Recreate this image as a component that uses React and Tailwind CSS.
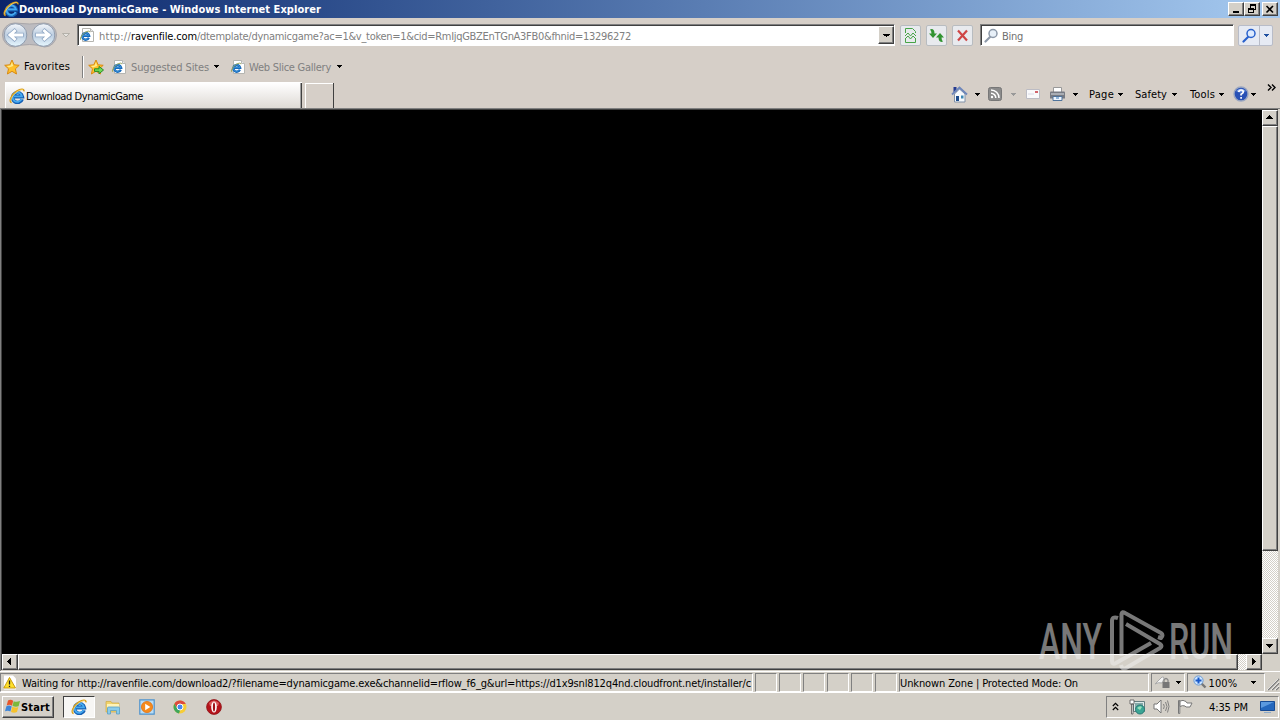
import React, { useLayoutEffect, useRef, useState } from "react";

const tahoma = "font-['DejaVu_Sans_Condensed','DejaVu_Sans',sans-serif]";

const raised = "bg-[#d4d0c8] border border-t-white border-l-white border-r-[#404040] border-b-[#404040] shadow-[inset_-1px_-1px_0_#808080]";
const sunken = "border border-t-[#808080] border-l-[#808080] border-r-white border-b-white";
const input = "border border-t-[#808080] border-l-[#808080] border-r-white border-b-white bg-white shadow-[inset_1px_1px_0_#404040]";

// One line of text whose letter spacing is adjusted until it is w pixels wide
const Label = ({ children, w, className = "" }) => {
  const ref = useRef(null);
  const [spacing, setSpacing] = useState(0);

  useLayoutEffect(() => {
    const natural = ref.current.getBoundingClientRect().width;
    setSpacing((w - natural) / ref.current.textContent.length);
  }, [w]);

  return (
    <span ref={ref} className={`shrink-0 whitespace-nowrap leading-[15px] ${className}`} style={{ letterSpacing: spacing }}>
      {children}
    </span>
  );
};

const Caret = ({ color = "#000", className = "", size = 5 }) => (
  <svg width={size} height="3" viewBox="0 0 5 3" className={`shrink-0 ${className}`} preserveAspectRatio="none" shapeRendering="crispEdges">
    <path d="M0 0H5V1H4V2H3V3H2V2H1V1H0z" fill={color} />
  </svg>
);

const IeLogo = ({ className = "" }) => (
  <svg width="16" height="16" viewBox="0 0 16 16" className={`shrink-0 ${className}`}>
    <path d="M13.2 11.2A4.9 4.9 0 1 1 13.4 8.8H5" fill="none" stroke="#1560b4" strokeWidth="3.5" />
    <path d="M12.6 11A4.7 4.7 0 1 1 12.9 8.4H5" fill="none" stroke="#46aaf0" strokeWidth="1.9" />
    <path d="M2.6 14.6C-.8 13.6 2.6 6.6 7.6 3.2C11.5 .7 15.4.2 14.9 3.4" fill="none" stroke="#d99c18" strokeWidth="1.5" />
    <path d="M2.4 13.6C.6 12.2 4 6.8 8 3.8C11 1.8 13.5 1.2 14.2 2" fill="none" stroke="#ffe37a" strokeWidth=".7" />
  </svg>
);

const IePage = ({ className = "" }) => (
  <svg width="16" height="16" viewBox="0 0 16 16" className={`shrink-0 ${className}`}>
    <path d="M3.5 1.5h8l3 3v10h-11z" fill="#fff" stroke="#b5b5b0" />
    <path d="M11.5 1.5v3h3" fill="#e8e8e8" stroke="#b8b8b4" />
    <path d="M9.8 10.8A3.4 3.4 0 1 1 10.1 8.8H4" fill="none" stroke="#1767b8" strokeWidth="2.4" />
    <path d="M9.5 10.6A3.3 3.3 0 1 1 9.8 8.6H4" fill="none" stroke="#3c9be0" strokeWidth=".8" />
    <path d="M1.7 12.8C.7 11 3.5 6.8 6.5 5.2C8.5 4.1 10.9 3.5 10.9 5.2" fill="none" stroke="#9aa652" strokeWidth="1" />
  </svg>
);

const Star = ({ add = false }) => (
  <svg width="16" height="16" viewBox="0 0 16 16" className="shrink-0">
    <path d="M8 1L10.1 5.8L15.2 6.3L11.4 9.8L12.5 15L8 12.3L3.4 15L4.5 9.8L.7 6.3L5.8 5.8z" fill="#ffc02a" stroke="#d98a12" strokeLinejoin="round" />
    <path d="M8 3L9.2 7L5 8.6L2.6 7L6.5 6.6z" fill="#ffeb8a" />
    {add && <path d="M6.5 9.8h4.5V7.4L15.5 11l-4.5 3.8v-2.4H6.5z" fill="#6fda58" stroke="#2b8a25" />}
  </svg>
);

const WindowButton = ({ children, className = "" }) => (
  <div className={`${raised} flex h-[14px] w-4 items-center justify-center ${className}`}>{children}</div>
);

const TitleBar = () => (
  <header className="flex h-[18px] items-center bg-linear-to-r from-[#0a246a] to-[#a6caf0] pl-[3px] pr-[2px]">
    <IeLogo />
    <Label w={302} className="font-bold text-white">Download DynamicGame - Windows Internet Explorer</Label>
    <WindowButton className="ml-auto">
      <svg width="12" height="10" shapeRendering="crispEdges"><path d="M3 7h6v2H3z" /></svg>
    </WindowButton>
    <WindowButton>
      <svg width="10" height="10" shapeRendering="crispEdges" fill="none" stroke="#000">
        <path d="M3.5 3.5v-3h5v5h-2M3 1.5h6M1.5 4.5h5v4h-5zM1 5.5h6" />
      </svg>
    </WindowButton>
    <WindowButton className="ml-[2px]">
      <svg width="10" height="9"><path d="M1.5 1l6.5 6.5M8 1L1.5 7.5" stroke="#000" strokeWidth="1.6" /></svg>
    </WindowButton>
  </header>
);

const NavArrows = () => (
  <svg width="72" height="30" viewBox="-.5 0 72 30" className="shrink-0">
    <defs>
      <linearGradient id="orb" x1="0" y1="0" x2="0" y2="1">
        <stop offset="0" stopColor="#f4f7fb" />
        <stop offset=".5" stopColor="#bccde0" />
        <stop offset="1" stopColor="#e6f7ff" />
      </linearGradient>
    </defs>
    <path d="M14 3Q29 5 44 3A12 12 0 0 1 44 27Q29 22 14 27A12 12 0 0 1 14 3z" fill="#bdbcc0" stroke="#a8a6aa" />
    {[15, 43].map((x) => (
      <circle key={x} cx={x} cy="15" r="11.3" fill="url(#orb)" stroke="#8f9cae" />
    ))}
    <g fill="none" strokeLinecap="square">
      <path d="M21 15H10M14 11L9.5 15L14 19M37 15H48M44 11L48.5 15L44 19" stroke="#8ea6c4" strokeWidth="4.4" />
      <path d="M21 15H10M14 11L9.5 15L14 19M37 15H48M44 11L48.5 15L44 19" stroke="#fff" strokeWidth="3" />
    </g>
    <path d="M62 13.5h7L65.5 17z" fill="#e6e4e0" stroke="#aaa7a0" strokeWidth=".8" />
  </svg>
);

const ToolButton = ({ children, className = "" }) => (
  <div className={`flex h-[21px] w-[21px] items-center justify-center rounded-[2px] border border-[#b8bcc0] bg-[#e8eaee] ${className}`}>
    {children}
  </div>
);

const Magnifier = ({ stroke, lens }) => (
  <svg width="15" height="15" viewBox="0 0 15 15">
    <path d="M6.5 8.5L1.5 13.5" stroke={stroke} strokeWidth="2.2" strokeLinecap="round" />
    <circle cx="9" cy="5.5" r="4" fill={lens} stroke={stroke} strokeWidth="1.5" />
  </svg>
);

const NavBar = () => (
  <div className="flex h-[34px] items-center bg-[#d6cfc8]">
    <NavArrows />
    <div className={`${input} ml-[5px] flex h-[22px] w-[818px] items-center text-[#808080]`}>
      <IePage className="ml-px" />
      <Label className="ml-1 mt-[2px]" w={32}>http://</Label>
      <Label className="mt-[2px] text-black" w={66}>ravenfile.com</Label>
      <Label className="mt-[2px]" w={434}>/dtemplate/dynamicgame?ac=1&amp;v_token=1&amp;cid=RmIjqGBZEnTGnA3FB0&amp;fhnid=13296272</Label>
      <div className={`${raised} ml-auto flex h-[18px] w-4 items-center justify-center`}>
        <Caret size={7} />
      </div>
    </div>
    <ToolButton className="ml-[5px]">
      <svg width="13" height="15" fill="none" stroke="#47a447">
        <path d="M1.5 5V.5h7l3 3V5M1.5 10v4.5h10V10M1 8l3-3 2.5 3L9 5l3 3M1 11l3-3 2.5 3L9 8l3 3" />
      </svg>
    </ToolButton>
    <ToolButton className="ml-[5px]">
      <svg width="17" height="15" fill="#329432">
        <path d="M3.5 1Q6.5 1 6.5 5.5H9L5 10L1 5.5h2.5Q3.5 3 2 1.5z" />
        <path d="M13.5 14Q10.5 13.5 10.5 9.5H8L12 5l4 4.5h-2.5Q13.5 12 15 13.5z" />
      </svg>
    </ToolButton>
    <ToolButton className="ml-[5px]">
      <svg width="13" height="13"><path d="M2 1.5l9 10M11 1.5l-9 10" stroke="#cf4545" strokeWidth="2.2" /></svg>
    </ToolButton>
    <div className={`${input} ml-[7px] flex h-[22px] w-[254px] items-center pl-[3px]`}>
      <Magnifier stroke="#8c98a8" lens="#e8f0f8" />
      <Label className="ml-[3px] mt-[2px] text-[#707070]" w={21}>Bing</Label>
    </div>
    <div className="ml-1 flex h-[21px] w-[35px] items-center rounded-[2px] border border-[#b8bcc8] bg-[#e6eaf3]">
      <div className="flex h-full w-[21px] items-center justify-center border-r border-[#b8bcc8]">
        <Magnifier stroke="#2860cc" lens="#dceaff" />
      </div>
      <Caret className="ml-1" color="#2050a0" />
    </div>
  </div>
);

const FavoritesBar = () => (
  <div className="flex h-[29px] items-center bg-[#d6cfc8] pl-1">
    <Star />
    <Label className="ml-1" w={46}>Favorites</Label>
    <div className="ml-3 mr-[4px] h-[22px] w-[2px] border-l border-[#808080] bg-white" />
    <Star add />
    <IePage className="ml-[7px]" />
    <Label className="ml-[4px] mt-[2px] text-[#808080]" w={78}>Suggested Sites</Label>
    <Caret className="ml-[5px]" />
    <IePage className="ml-[11px]" />
    <Label className="ml-[3px] mt-[2px] text-[#808080]" w={82}>Web Slice Gallery</Label>
    <Caret className="ml-[6px]" />
  </div>
);

const HomeIcon = () => (
  <svg width="17" height="17" viewBox="0 0 17 17">
    <path d="M2.5 1h3v5h-3z" fill="#253a90" />
    <path d="M3.5 8L8.5 3l5.5 5v8h-10.5z" fill="#f6f9fc" stroke="#8292a8" />
    <path d="M1 8.5L8.5 1.5L16 8.5" fill="none" stroke="#6d86bb" strokeWidth="1.8" />
    <path d="M5 10h3v5H5z" fill="#1d4c8c" /><path d="M10 9.5h2.5v3H10z" fill="#3d88b5" />
  </svg>
);

const FeedIcon = () => (
  <svg width="14" height="14" viewBox="0 0 14 14">
    <rect x=".5" y=".5" width="13" height="13" rx="2" fill="#8b8b8b" stroke="#777" />
    <path d="M3 6.2A4.8 4.8 0 0 1 7.8 11M3 3A8 8 0 0 1 11 11" fill="none" stroke="#fff" strokeWidth="1.5" />
    <circle cx="4" cy="10" r="1.2" fill="#fff" />
  </svg>
);

const PrinterIcon = () => (
  <svg width="17" height="16" viewBox="0 0 17 16">
    <path d="M4.5 1.5h8v5h-8z" fill="#fff" stroke="#999" />
    <path d="M1 6.5q0-1 1-1h13q1 0 1 1v6H1z" fill="#777b83" />
    <path d="M2 7h13v2H2z" fill="#a9adb4" />
    <path d="M4 10.5h9v4H4z" fill="#eef6ff" stroke="#50749c" />
    <path d="M7 12h3" stroke="#3777b5" />
  </svg>
);

const HelpIcon = () => (
  <svg width="16" height="16" viewBox="0 0 16 16">
    <circle cx="8" cy="8" r="7" fill="#2951b5" stroke="#9aa6c0" strokeWidth="1.4" />
    <path d="M3 5Q8 .5 13 5Q8 8 3 5" fill="#7c9fe3" />
    <path d="M5.8 6Q6 4 8.1 4T10.3 6Q10.3 7 8.1 8.3V9.6M8.1 11v1.7" fill="none" stroke="#fff" strokeWidth="1.7" />
  </svg>
);

const TabRow = () => (
  <div className="flex h-[27px] items-end bg-[#d6cfc8] pl-[5px]">
    <div className="flex h-[26px] w-[297px] items-center border-t border-l border-white bg-linear-to-b from-white to-[#dedad5] pl-[3px] shadow-[inset_-1px_0_0_#404040,inset_-2px_0_0_#a0a0a0]">
      <IeLogo />
      <Label className="ml-px mt-[2px]" w={117}>Download DynamicGame</Label>
    </div>
    <div className="ml-[3px] h-[25px] w-[28px] border-t border-l border-white shadow-[1px_0_0_#404040]" />
    <div className="ml-auto flex h-full items-center pr-[4px] pb-[1px]">
      <HomeIcon />
      <Caret className="ml-[7px]" />
      <div className="ml-[8px]"><FeedIcon /></div>
      <Caret className="ml-[9px]" color="#999" />
      <svg width="14" height="10" className="ml-[10px]">
        <path d="M.5.5h13v9H.5z" fill="#f9f9fb" stroke="#bcbcc4" />
        <path d="M9 2h3v2H9z" fill="#d2636b" /><path d="M2 5h6" stroke="#d8d8e4" />
      </svg>
      <div className="ml-[9px]"><PrinterIcon /></div>
      <Caret className="ml-[7px]" />
      <Label className="ml-[11px]" w={25}>Page</Label>
      <Caret className="ml-[4px]" />
      <Label className="ml-[12px]" w={32}>Safety</Label>
      <Caret className="ml-[5px]" />
      <Label className="ml-[13px]" w={25}>Tools</Label>
      <Caret className="ml-[4px]" />
      <div className="ml-[9px]"><HelpIcon /></div>
      <Caret className="ml-[2px]" />
      <svg width="9" height="7" className="ml-[11px] mb-[13px]" fill="none" stroke="#000" strokeWidth="1.4">
        <path d="M1 .5l3 3-3 3M5 .5l3 3-3 3" />
      </svg>
    </div>
  </div>
);

const track = "bg-[repeating-conic-gradient(#fff_0_25%,#d4d0c8_0_50%)] bg-[length:2px_2px]";

const arrows = {
  up: "M4 2h1v1h1v1h1v1h1v1H1V5h1V4h1V3h1z",
  down: "M1 3h7v1H7v1H6v1H5v1H4V6H3V5H2V4H1z",
  left: "M2 4h1V3h1V2h1V1h1v7H5V7H4V6H3V5H2z",
  right: "M3 1h1v1h1v1h1v1h1v1H6v1H5v1H4v1H3z",
};

const ScrollButton = ({ dir }) => (
  <div className={`${raised} flex h-4 w-4 shrink-0 items-center justify-center pr-px pb-px`}>
    <svg width="9" height="9" shapeRendering="crispEdges"><path d={arrows[dir]} /></svg>
  </div>
);

const Viewport = () => (
  <main className="flex h-[563px] flex-col border-t border-l border-[#808080] bg-[#d4d0c8] pr-[2px] pb-px">
    <div className="flex h-[545px] border-t border-l border-[#404040]">
      <div className="flex-1 bg-black" />
      <div className={`flex w-4 flex-col ${track}`}>
        <ScrollButton dir="up" />
        <div className={`${raised} h-[425px]`} />
        <div className="flex-1" />
        <ScrollButton dir="down" />
      </div>
    </div>
    <div className="flex h-4 border-l border-[#404040]">
      <div className={`flex flex-1 ${track}`}>
        <ScrollButton dir="left" />
        <div className={`${raised} w-[1220px]`} />
        <div className="flex-1" />
        <ScrollButton dir="right" />
      </div>
      <div className="w-4 bg-[#d4d0c8]" />
    </div>
  </main>
);

const StatusBar = () => (
  <div className="flex h-[22px] items-center gap-[2px] border-t border-b border-white bg-[#d4d0c8]">
    <div className={`${sunken} flex h-[19px] w-[753px] shrink-0 items-center pl-[2px]`}>
      <svg width="14" height="15" viewBox="0 0 14 15" className="shrink-0">
        <path d="M1 .5h9l3 3v11H1z" fill="#fff" />
        <path d="M6.5 2.5L12.5 13H.8z" fill="#ffe02a" stroke="#c89a10" strokeLinejoin="round" />
        <path d="M6.5 5.5v4M6.5 10.7V12" stroke="#222" strokeWidth="1.3" />
      </svg>
      <Label className="ml-[5px] mt-[2px]" w={729}>
        Waiting for http://ravenfile.com/download2/?filename=dynamicgame.exe&amp;channelid=rflow_f6_g&amp;url=https://d1x9snl812q4nd.cloudfront.net/installer/c
      </Label>
    </div>
    {[0, 1, 2, 3, 4, 5].map((i) => (
      <div key={i} className={`${sunken} h-[19px] w-[22px] shrink-0`} />
    ))}
    <div className={`${sunken} flex h-[19px] w-[251px] items-center`}>
      <Label className="mt-[2px]" w={178}>Unknown Zone | Protected Mode: On</Label>
    </div>
    <div className={`${sunken} flex h-[19px] w-[35px] items-center`}>
      <svg width="18" height="16" viewBox="0 0 18 16" className="ml-[2px]">
        <path d="M1 10L8 3Q10 2 10 5L8 9Q4 8 1 10" fill="#f4f4f4" stroke="#aaa" />
        <path d="M8.5 8h7v6h-7z" fill="#777" />
        <path d="M10 8V6q2-3 4 0v2" fill="none" stroke="#888" strokeWidth="1.3" />
      </svg>
      <Caret className="ml-1" />
    </div>
    <div className={`${sunken} flex h-[19px] w-[78px] items-center pl-[5px]`}>
      <svg width="14" height="14" viewBox="0 0 14 14">
        <path d="M8 8l4.5 4.5" stroke="#777" strokeWidth="2.4" />
        <circle cx="5.5" cy="5.5" r="4.6" fill="#cce5ff" stroke="#6d9bd3" />
        <path d="M5.5 2.5v6M2.5 5.5h6" stroke="#1859c9" strokeWidth="2" />
      </svg>
      <Label className="ml-px mt-[2px]" w={29}>100%</Label>
      <Caret className="ml-[14px]" />
    </div>
    <svg width="13" height="13" className="mt-1 shrink-0">
      <path d="M1 12L12 1M5 12L12 5M9 12l3-3" stroke="#808080" strokeWidth="1.6" />
      <path d="M0 12L11 1M4 12L12 4M8 12l4-4" stroke="#fff" strokeWidth=".7" />
    </svg>
  </div>
);

const WindowsFlag = () => (
  <svg width="16" height="15" viewBox="0 0 16 15" className="shrink-0">
    <path d="M3 1.5Q5.5 0 8.2 1.8L7 6.8Q4.5 5 1.7 6.5z" fill="#e8562a" />
    <path d="M8.7 2.2Q11.5 3.5 15 2L13.6 7.2Q10.8 8.2 7.5 7z" fill="#7cb83a" />
    <path d="M1.4 7.2Q4.2 5.8 6.7 7.5L5.4 12.5Q3 11 0 12.3z" fill="#3f86d8" />
    <path d="M7.3 7.8Q10.5 9 13.3 7.9L12 13Q9.2 14.4 6 13.1z" fill="#f6c22c" />
  </svg>
);

const ExplorerIcon = () => (
  <svg width="16" height="16" viewBox="0 0 16 16">
    <path d="M1 2.5h5l1 1.5h7v9H1z" fill="#f1d36b" stroke="#cfaa45" strokeWidth=".7" />
    <path d="M2 5h12v4H2z" fill="#fff3b8" />
    <path d="M2.5 15V9q0-1 1-1h10q1 0 1 1v6h-3v-3.5h-6V15z" fill="#8acbea" stroke="#5a9fc4" strokeWidth=".8" />
  </svg>
);

const PlayerIcon = () => (
  <svg width="16" height="16" viewBox="0 0 16 16">
    <path d="M.8.8h14.4v14.4H.8z" fill="#b8dcf5" stroke="#4f93cc" strokeWidth="1.2" />
    <circle cx="8" cy="8" r="5.6" fill="#f58a1c" stroke="#df6c0c" strokeWidth=".7" />
    <path d="M6.2 4.8v6.4L11.3 8z" fill="#fff" />
  </svg>
);

const ChromeIcon = () => (
  <svg width="14" height="14" viewBox="0 0 14 14">
    <circle cx="7" cy="7" r="6.5" fill="#f7cd36" />
    <path d="M1.4 3.7A6.5 6.5 0 0 1 12.8 4H7L4.2 8.5z" fill="#dd4b3e" />
    <path d="M1.4 3.7L4.4 8.8L7.4 9.8L6 13.4A6.5 6.5 0 0 1 1.4 3.7" fill="#3fa65a" />
    <circle cx="7" cy="7" r="3" fill="#4688ef" stroke="#fff" />
  </svg>
);

const OperaIcon = () => (
  <svg width="16" height="16" viewBox="0 0 16 16">
    <circle cx="8" cy="8" r="7.4" fill="#b5141b" stroke="#8e1015" strokeWidth=".8" />
    <path d="M3 4Q8-1 13 4L12 7H4z" fill="#db5a5c" />
    <ellipse cx="8" cy="8" rx="2.8" ry="5.6" fill="#fff" />
    <ellipse cx="8" cy="8" rx="1.1" ry="4.6" fill="#a11218" />
  </svg>
);

const TaskBar = () => (
  <footer className="flex h-[27px] items-center bg-[#d4d0c8] pl-[2px]">
    <div className={`${raised} flex h-[22px] w-[52px] items-center pl-[2px]`}>
      <WindowsFlag />
      <Label className="mt-px font-bold" w={29}>Start</Label>
    </div>
    <div className="ml-[9px] flex h-[22px] w-[32px] items-center justify-center border border-t-[#404040] border-l-[#404040] border-r-white border-b-white bg-[#f7f6f4]">
      <IeLogo />
    </div>
    <div className="ml-[10px] flex items-center gap-[18px]">
      <ExplorerIcon />
      <PlayerIcon />
      <ChromeIcon />
      <div className="ml-px"><OperaIcon /></div>
    </div>
    <div className={`${sunken} ml-auto mr-[1px] flex h-[22px] w-[173px] items-center`}>
      <svg width="7" height="9" className="ml-[5px]" fill="none" stroke="#000" strokeWidth="1.2">
        <path d="M.8 4L3.5 1.3L6.2 4M.8 8L3.5 5.3L6.2 8" />
      </svg>
      <svg width="17" height="16" viewBox="0 0 17 16" className="ml-[10px]">
        <path d="M4.5 2.5h11v10h-11z" fill="#dce8e8" stroke="#667e80" />
        <path d="M6 4h8v6H6z" fill="#85aaa9" />
        <circle cx="11" cy="10.5" r="4.5" fill="#3ba594" stroke="#287a75" />
        <path d="M8 9q3-3 5-1l-2 3z" fill="#98e0bd" />
        <path d="M1 1h4v4H1zM2.5 5h1.5v10H2.500z" fill="#fff" stroke="#555" strokeWidth=".8" />
      </svg>
      <svg width="17" height="15" viewBox="0 0 17 15" className="ml-[7px]" fill="none" stroke="#777">
        <path d="M1 5h3l4-4v13l-4-4H1z" fill="#fff" />
        <path d="M10.5 5q1.5 2.5 0 5M12.5 3q3 4.5 0 9M14.5 1.5q3 6 0 12" strokeWidth=".9" />
      </svg>
      <svg width="16" height="15" viewBox="0 0 16 15" className="ml-[7px]" fill="#fff" stroke="#777">
        <path d="M1.5 14.5V1.5h1.3v13z" /><path d="M3 2q3-1.5 6 .5l1 1.5h5l-2 4H9L8 7Q5.5 6 3 7.5z" />
      </svg>
      <Label className="ml-[16px] mt-px" w={39}>4:35 PM</Label>
      <svg width="15" height="14" viewBox="0 0 15 14" className="ml-[12px]">
        <path d="M.5 1.5h14v9H.5z" fill="#2467bd" stroke="#174b94" />
        <path d="M1 2h13L1 8z" fill="#5b99df" /><path d="M4 12.5h7" stroke="#8eabc9" />
      </svg>
    </div>
  </footer>
);

const Watermark = () => (
  <svg width="212" height="76" viewBox="1030 602 212 76" className="absolute left-[1030px] top-[602px] opacity-50">
    <g fill="#f0f0f0" fontFamily="Roboto" fontSize="50" fontWeight="500">
      <text x="1039" y="659" textLength="63" lengthAdjust="spacingAndGlyphs">ANY</text>
      <text x="1169" y="659" textLength="64" lengthAdjust="spacingAndGlyphs">RUN</text>
    </g>
    <g fill="none" stroke="#f0f0f0" strokeWidth="4" strokeLinejoin="round">
      <path d="M1118 618Q1112 616 1112 621V661Q1112 665 1116 663L1151 643" />
      <path d="M1121.5 656V614Q1122 611 1125 613L1161 633Q1164 635 1161 638L1158 637" />
      <path d="M1126 624L1160 644Q1163 646 1160 648L1126 668Q1122 670 1121 665" />
    </g>
  </svg>
);

const App = () => (
  <div className={`relative h-[720px] w-[1280px] overflow-hidden bg-[#d4d0c8] text-[11px] text-black ${tahoma}`}>
    <TitleBar />
    <NavBar />
    <FavoritesBar />
    <TabRow />
    <Viewport />
    <StatusBar />
    <TaskBar />
    <Watermark />
  </div>
);

export default App;
